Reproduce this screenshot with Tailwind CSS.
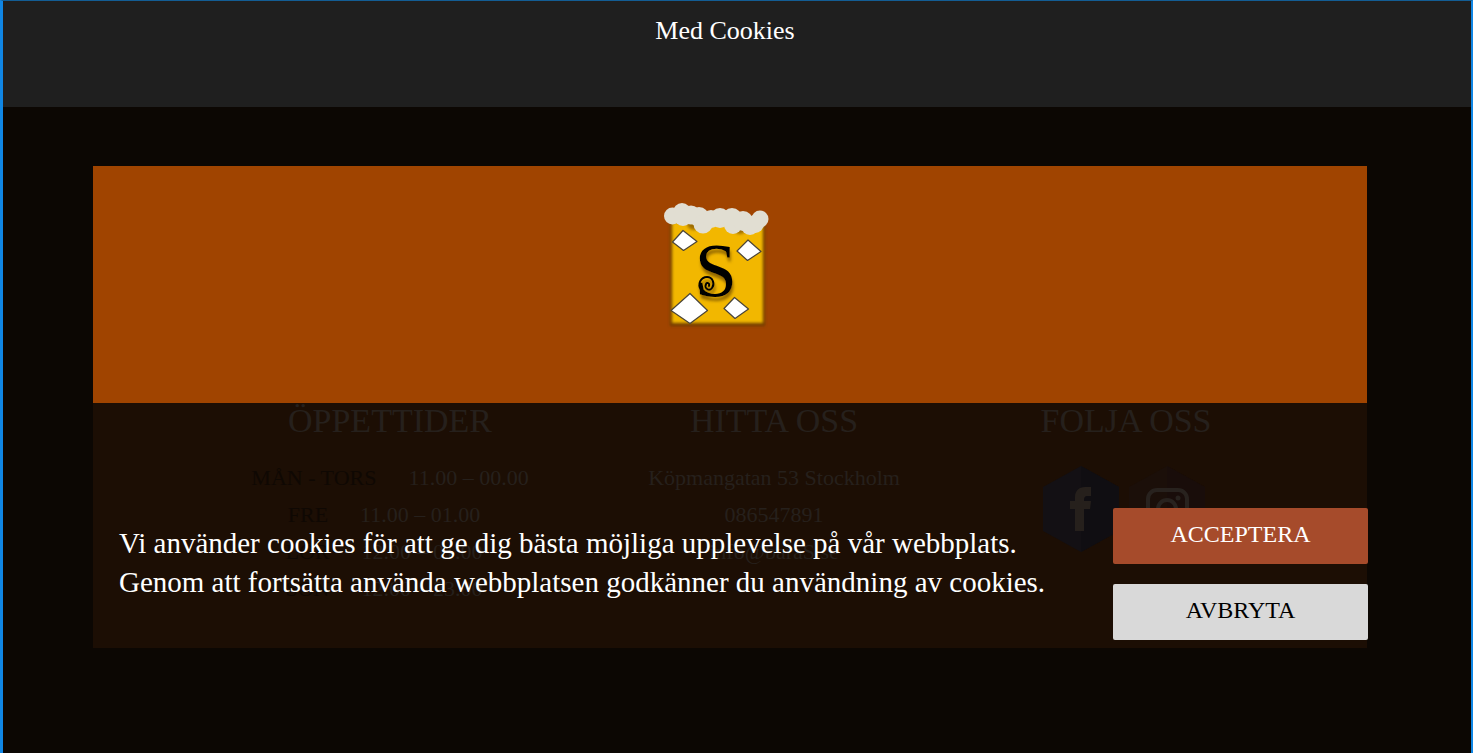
<!DOCTYPE html>
<html lang="sv">
<head>
<meta charset="utf-8">
<meta name="viewport" content="width=device-width, initial-scale=1">
<title>Med Cookies</title>
<script src="https://cdn.jsdelivr.net/npm/@tailwindcss/browser@4"></script>
</head>
<body class="flex min-h-screen flex-col border-t border-r-2 border-l-3 border-t-[#135d94] border-r-[#1086e4] border-l-[#1086e4] bg-[#0c0703] font-['Liberation_Serif',serif] text-white">
<header class="flex h-[106px] justify-center bg-[#1f1f1f] pt-3 pr-6">
  <h1 class="text-[26px] leading-9">Med Cookies</h1>
</header>
<main class="grow pt-[59px] pr-[104px] pb-[105px] pl-[90px]">
  <div class="relative bg-[#1c0e04]">
    <div class="flex h-[237px] justify-center bg-[#a04400] pt-8 pr-7">
      <svg class="h-[136px] w-[116px]" viewBox="658 198 116 136" role="img" aria-label="Bar S">
        <defs>
          <filter id="edge" x="-10%" y="-10%" width="120%" height="120%"><feGaussianBlur stdDeviation="1.5"/></filter>
          <filter id="soft" x="-20%" y="-20%" width="140%" height="140%"><feGaussianBlur stdDeviation="1.6"/></filter>
          <filter id="drop" x="-20%" y="-20%" width="140%" height="140%"><feDropShadow dx="1" dy="4" stdDeviation="1.6" flood-color="#7a5500" flood-opacity=".8"/></filter>
        </defs>
        <rect x="670" y="222" width="95" height="104" fill="#6d3a00" filter="url(#edge)"/>
        <rect x="672" y="222" width="91" height="101" fill="#f2b705" filter="url(#edge)"/>
        <g fill="#8a5a00" filter="url(#soft)" opacity=".8">
          <circle cx="694" cy="223" r="7"/><circle cx="740" cy="227" r="7"/>
        </g>
        <g fill="#e1ded2">
          <circle cx="672.500" cy="216" r="8.500"/><circle cx="682" cy="212" r="9"/><circle cx="683" cy="217" r="9"/>
          <circle cx="691" cy="215" r="9.500"/><circle cx="699" cy="217" r="10"/><circle cx="703" cy="224" r="9.500"/>
          <circle cx="711" cy="219" r="9"/><circle cx="720" cy="218" r="10"/><circle cx="732" cy="218" r="10"/>
          <circle cx="733" cy="225" r="9"/><circle cx="743" cy="221" r="10"/><circle cx="750" cy="226" r="9"/>
          <circle cx="755" cy="224" r="9"/><circle cx="760" cy="219" r="8.500"/>
        </g>
        <g fill="#fff" stroke="#4a4438" stroke-width="1.200" stroke-linejoin="round">
          <path d="M683 230.500 697 241.500 683.500 250.500 672.500 242Z"/>
          <path d="M748 240 761 251.500 747.500 260.500 737 251Z"/>
          <path d="M690 293.500 707.500 310.500 690 323.500 671 310.500Z"/>
          <path d="M734.500 297.500 748.500 309 735 318.500 724 308.500Z"/>
        </g>
        <g filter="url(#drop)">
          <text x="716" y="296" font-family="'Liberation Serif',serif" font-size="76" text-anchor="middle" fill="#000">S</text>
          <path d="M701 290C697 284 701 277 707 277 713 277 715 284 712 288 709 292 704 288 706 284 707 282 710 283 709 286" fill="none" stroke="#000" stroke-width="2" stroke-linecap="round"/>
        </g>
      </svg>
    </div>
    <footer class="grid min-h-[245px] grid-cols-[362fr_406fr_298fr] pr-[92px] pl-[116px] text-center text-[22px] leading-[37px] whitespace-nowrap text-[#26201c]">
      <section>
        <h2 class="text-[34px] leading-9">ÖPPETTIDER</h2>
        <dl class="mt-5">
          <div class="flex justify-center gap-8"><dt class="text-[#0f0803]">MÅN - TORS</dt><dd>11.00 – 00.00</dd></div>
          <div class="flex justify-center gap-8 pr-3"><dt class="text-[#0f0803]">FRE</dt><dd>11.00 – 01.00</dd></div>
          <div class="flex justify-center gap-8 pr-3"><dt class="text-[#0f0803]">LÖR</dt><dd>12.00 – 01.00</dd></div>
          <div class="flex justify-center gap-8 pr-3"><dt class="text-[#0f0803]">SÖN</dt><dd>12.00 – 23.00</dd></div>
        </dl>
      </section>
      <section>
        <h2 class="text-[34px] leading-9">HITTA OSS</h2>
        <address class="mt-5 not-italic">
          <p>Köpmangatan 53 Stockholm</p>
          <p><a href="tel:086547891">086547891</a></p>
          <p><a href="mailto:info@baraS.se">info@baraS.se</a></p>
        </address>
      </section>
      <section>
        <h2 class="text-[34px] leading-9">FOLJA OSS</h2>
        <div class="mt-[26px] flex justify-center gap-2 pr-1">
          <a href="#facebook" aria-label="Facebook">
            <svg class="h-[88px] w-[78px]" viewBox="0 0 78 88">
              <path d="M39 1 77 22V66L39 87 1 66V22Z" fill="#131014"/>
              <path d="M39 1 77 22V66L39 87Z" fill="#100e12"/>
              <path d="M33 66V44H28V36H33V32C33 26 37 22 43 22H49V31H45Q42 31 42 35V36H49L48 44H42V66Z" fill="#26201c"/>
            </svg>
          </a>
          <a href="#instagram" aria-label="Instagram">
            <svg class="h-[88px] w-[78px]" viewBox="0 0 78 88">
              <path d="M39 1 77 22V66L39 87 1 66V22Z" fill="#1b0f09"/>
              <path d="M39 1 77 22V66L39 87Z" fill="#190d0a"/>
              <g fill="none" stroke="#28221e" stroke-width="4"><rect x="20" y="25" width="39" height="39" rx="9"/><circle cx="39" cy="44" r="9"/></g>
              <circle cx="50" cy="33" r="2.500" fill="#28221e"/>
            </svg>
          </a>
        </div>
      </section>
    </footer>
    <section aria-label="Cookies" class="absolute inset-x-0 bottom-2 -mr-px flex items-start justify-between pl-[26px]">
      <p class="pt-4 text-[29px] leading-[39px]">Vi använder cookies för att ge dig bästa möjliga upplevelse på vår webbplats.<br>Genom att fortsätta använda webbplatsen godkänner du användning av cookies.</p>
      <div class="flex w-[255px] shrink-0 flex-col gap-5 text-2xl">
        <button type="button" class="h-14 rounded-xs bg-[#a64b2b] pb-1 text-white">ACCEPTERA</button>
        <button type="button" class="h-14 rounded-xs bg-[#d9d9d9] pb-1 text-black">AVBRYTA</button>
      </div>
    </section>
  </div>
</main>
</body>
</html>
